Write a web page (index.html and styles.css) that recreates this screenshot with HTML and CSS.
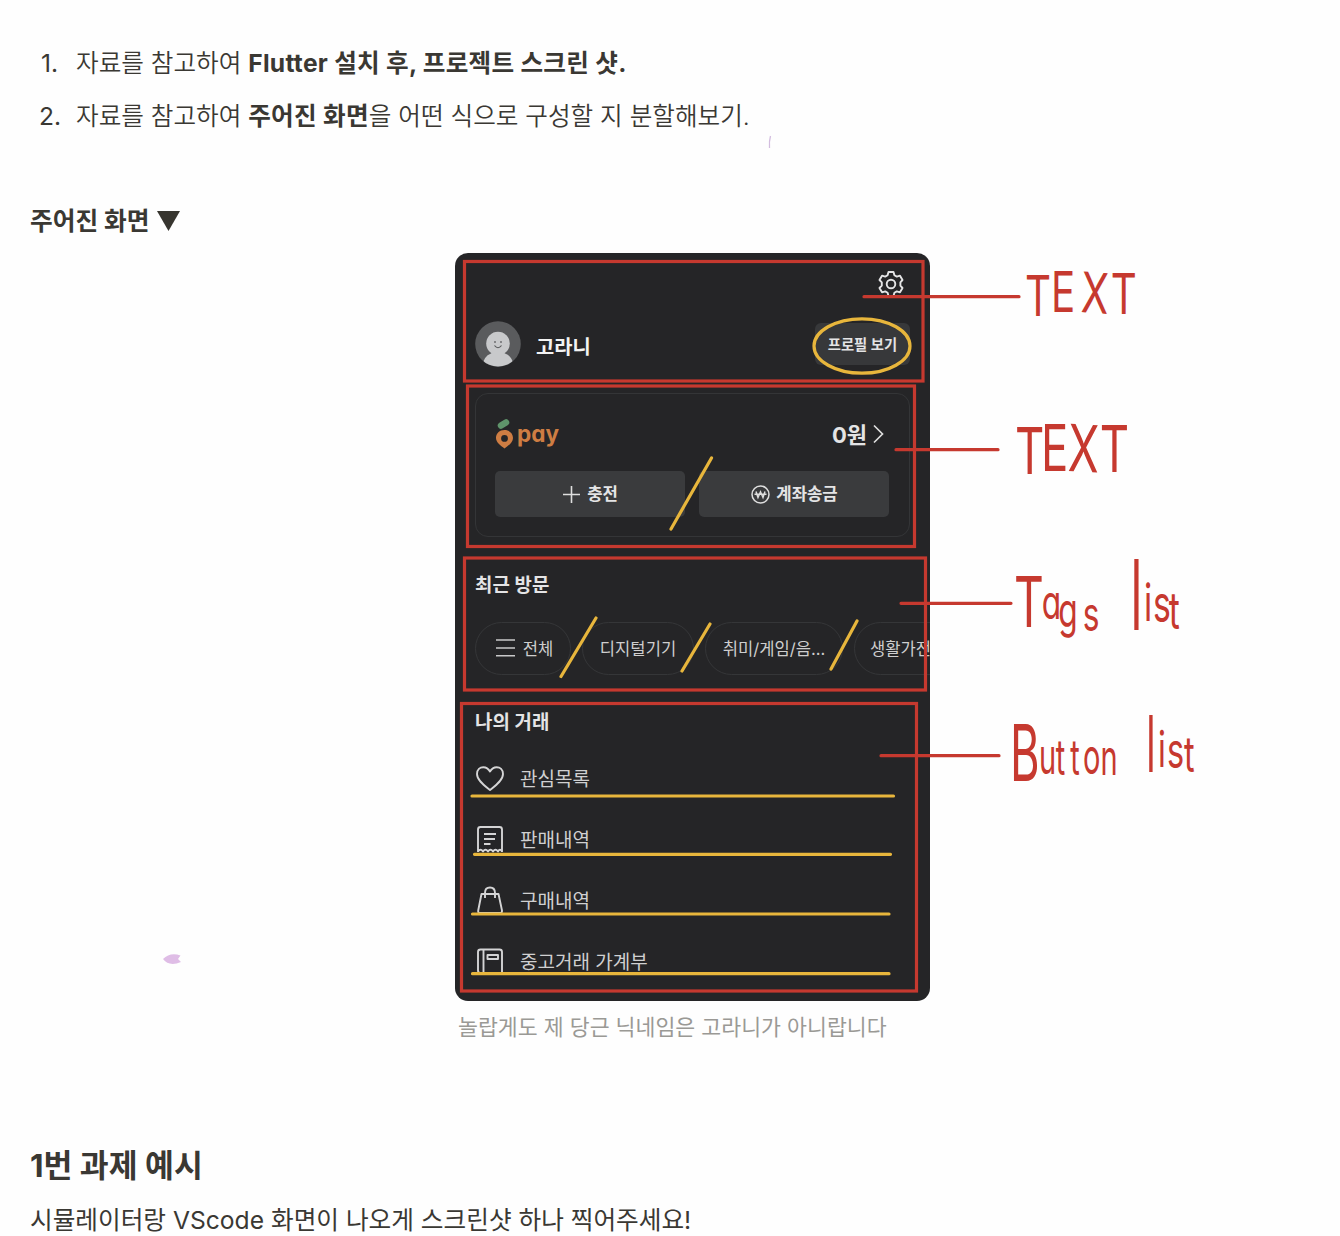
FILE: index.html
```html
<!DOCTYPE html>
<html lang="ko">
<head>
<meta charset="utf-8">
<title>과제 안내</title>
<link rel="stylesheet" href="styles.css">
</head>
<body>
<main class="page">
  <ol class="tasks">
    <li><span class="num first">1.</span><span>자료를 참고하여 <b>Flutter 설치 후, 프로젝트 스크린 샷.</b></span></li>
    <li><span class="num">2.</span><span>자료를 참고하여 <b>주어진 화면</b>을 어떤 식으로 구성할 지 분할해보기.</span></li>
  </ol>
  <h3 class="given"><span>주어진 화면</span><svg width="24" height="20" viewBox="0 0 24 20"><path d="M0 0H23L11.5 20Z" fill="#37352f"/></svg></h3>
  <figure class="figure">
    <section class="phone">
      <header class="top">
        <svg width="28" height="28" viewBox="0 0 28 28" fill="none" stroke="#e4e4e5" stroke-width="1.9" stroke-linejoin="round"><path d="M11.500 2h5l.9 3.200 2.400 1.400 3.200-.9 2.500 4.300-2.100 2.300v3.400l2.100 2.300-2.500 4.300-3.200-.9-2.400 1.400-.9 3.200h-5l-.9-3.200-2.400-1.400-3.200.9L2.500 18l2.300-2.300v-3.400L2.500 10 5 5.700l3.200.9 2.400-1.400Z"/><circle cx="14" cy="14" r="4.300"/></svg>
      </header>
      <div class="profile">
        <svg width="46" height="46" viewBox="0 0 46 46"><defs><clipPath id="face"><circle cx="23" cy="23" r="22.500"/></clipPath></defs><circle cx="23" cy="23" r="22.800" fill="#5a5b5d"/><g clip-path="url(#face)" fill="#c8c9cb"><circle cx="23" cy="22.500" r="11.800"/><path d="M7 46Q8.500 35 16 32.500Q18.500 31 18 29H28Q27.500 31 30 32.500Q37.500 35 39 46Z"/></g><path d="M20 20v2M26 20v2M19.500 24.500q3.500 4.500 7 0" fill="none" stroke="#57585a" stroke-width="1.200"/></svg>
        <strong class="name">고라니</strong>
        <span class="view">프로필 보기</span>
      </div>
      <div class="card">
        <div class="balance">
          <svg width="19" height="30" viewBox="0 0 19 30"><path d="M6 6.500L11 3.500" stroke="#5f946b" stroke-width="6.500" stroke-linecap="round"/><path fill-rule="evenodd" d="M9.500 11C14.500 11 18 14.500 18 19C18 23.500 13.500 26.500 9.500 29.500C5.500 26.500 1 23.500 1 19C1 14.500 4.500 11 9.500 11ZM9.500 16A3.400 3.400 0 1 0 9.500 22.800A3.400 3.400 0 1 0 9.500 16Z" fill="#ce7d43"/></svg>
          <span class="pay">pay</span>
          <span class="won">0원</span>
          <svg class="chev" width="12" height="20" viewBox="0 0 12 20" fill="none" stroke="#dedede" stroke-width="1.700"><path d="M1 1.500L9.500 10L1 18.500"/></svg>
        </div>
        <div class="actions">
          <span class="action"><svg width="17" height="17" viewBox="0 0 17 17" stroke="#dedede" stroke-width="1.600"><path d="M8.500 0V17M0 8.500H17"/></svg><b>충전</b></span>
          <span class="action send"><svg width="19" height="19" viewBox="0 0 19 19" fill="none" stroke="#dedede" stroke-width="1.500"><circle cx="9.500" cy="9.500" r="8.500"/><path d="M5 6.500L7 12.500L9.500 6.800L12 12.500L14 6.500M3.500 9.300H15.500" stroke-width="1.500"/></svg><b>계좌송금</b></span>
        </div>
      </div>
      <h4 class="heading recent">최근 방문</h4>
      <div class="chips">
        <span class="chip all"><svg width="19" height="18" viewBox="0 0 19 18" stroke="#c9c9ca" stroke-width="1.600"><path d="M0 1H19M0 9H19M0 16.800H19"/></svg>전체</span>
        <span class="chip digital">디지털기기</span>
        <span class="chip hobby">취미/게임/음...</span>
        <span class="chip home">생활가전</span>
      </div>
      <h4 class="heading trade">나의 거래</h4>
      <ul class="menu">
        <li><svg width="30" height="30" viewBox="0 0 30 30"><path d="M15 26C10 22 2 16.500 2 10C2 5.500 5 3.200 8.300 3.200C11.200 3.200 13.500 4.800 15 7.500C16.500 4.800 18.800 3.200 21.700 3.200C25 3.200 28 5.500 28 10C28 16.500 20 22 15 26Z"/></svg>관심목록</li>
        <li><svg width="30" height="30" viewBox="0 0 30 30"><path d="M3 27V4.500Q3 2 5.500 2H24.500Q27 2 27 4.500V27M9 9H21M9 14H20M9 19H15.500M3 26.500Q5.500 23 8 26.500Q10.500 23 13 26.500Q15.500 23 18 26.500Q20.500 23 23 26.500Q25 23 27 26.500"/></svg>판매내역</li>
        <li><svg width="30" height="30" viewBox="0 0 30 30"><path d="M6.500 8H23.500L27 24.500Q27.200 27 25 27H5Q2.800 27 3.200 24.500ZM10 12V7Q10 1.500 15 1.500T20 7V12"/></svg>구매내역</li>
        <li><svg width="30" height="30" viewBox="0 0 30 30"><path d="M5.500 2.500H24.500Q27 2.500 27 5V26H5.500Q3 26 3 23.500V5Q3 2.500 5.500 2.500ZM8.500 2.500V26M12.500 8H23V12H12.500Z"/></svg>중고거래 가계부</li>
      </ul>
    </section>
    <figcaption>놀랍게도 제 당근 닉네임은 고라니가 아니랍니다</figcaption>
  </figure>
  <h2 class="example">1번 과제 예시</h2>
  <p class="note">시뮬레이터랑 VScode 화면이 나오게 스크린샷 하나 찍어주세요!</p>

  <svg class="ink" width="1340" height="1236" viewBox="0 0 1340 1236">
    <g class="red">
      <rect x="464.500" y="261.500" width="458.500" height="119.500"/>
      <rect x="467.500" y="386" width="447" height="160.500"/>
      <rect x="464.500" y="558" width="461" height="132"/>
      <rect x="461.500" y="703.500" width="455" height="287.500"/>
      <path d="M864 296.700H1019M896 449.700H998M901 603.300H1011M881 755.700H999"/>
    </g>
    <g class="yellow">
      <ellipse cx="862" cy="346" rx="48" ry="27.200"/>
      <path d="M711.500 458L671 529M596 618L561 676.500M710 624L682 671M857 621L831 669M472 796H893.500M474.500 854.300H890.500M472.500 914H889M472.500 973.700H889"/>
    </g>
    <g class="hand">
      <text transform="translate(1025 316) scale(.72 1)" font-size="56" x="0 36 77 119" y="0 -4 -4 -2" rotate="0 0 3 0">TEXT</text>
      <text transform="translate(1015 474) scale(.7 1)" font-size="65" x="0 37 75 121" y="0 -3 -3 -2" rotate="0 0 2 0">TEXT</text>
      <text transform="translate(1014 627) scale(.66 1)" font-size="70">T<tspan font-size="48" x="42 67 104" y="-8 0 4">ags</tspan></text>
      <text transform="translate(1129 630) scale(.65 1)" font-size="98" class="thin">l<tspan font-size="52" x="23 37 61" y="-9 -8 -1">ist</tspan></text>
      <text transform="translate(1010 781) scale(.58 1)" font-size="78">B<tspan font-size="50" x="50 79 104 126 156" y="-7 -6 -6 -7 -6">utton</tspan></text>
      <text transform="translate(1145 772) scale(.65 1)" font-size="78" class="thin">l<tspan font-size="50" x="20 34 60" y="-5 -4 0">ist</tspan></text>
    </g>
    <path d="M770.500 136Q769 141 769.500 148" fill="none" stroke="#d3bddf" stroke-width="1.300"/>
    <path d="M163 959Q170 952 180.500 955.500L178 959L181 962Q169 967 163 959Z" fill="#dfbde6"/>
  </svg>
</main>
</body>
</html>
```
FILE: styles.css
```css
* { box-sizing: border-box; }
body { margin: 0; background: #fefefe; color: #3a3833; font-family: Inter, "Noto Sans CJK KR", sans-serif; }
svg { display: block; flex: none; }
h2, h3, h4, p, ol, ul, figure { margin: 0; padding: 0; list-style: none; white-space: nowrap; }
.page { position: relative; width: 1340px; height: 1236px; overflow: hidden; padding: 37px 30px 0; }
.tasks li { display: flex; height: 53px; line-height: 53px; font-size: 24.6px; font-weight: 350; }
.tasks b { font-weight: 700; letter-spacing: .27px; }
.num { width: 46px; padding-left: 9px; font-weight: 400; }
.num.first { padding-left: 11px; }
.given { display: flex; align-items: center; gap: 8px; height: 40px; margin-top: 58px; font-size: 24.7px; line-height: 40px; font-weight: 700; }
.figure { width: 475px; margin: 12px 0 0 425px; }
.phone { height: 748px; padding: 17px 20px 0; overflow: hidden; border-radius: 13px; background: #252527; color: #e4e4e5; }
.top { display: flex; justify-content: flex-end; height: 51px; padding-right: 5px; }
.profile { display: flex; align-items: center; height: 46px; }
.name { margin-left: 15px; padding-top: 2px; font-size: 19.8px; font-weight: 700; color: #f3f3f3; }
.view { width: 95px; height: 42px; margin-left: auto; border-radius: 6px; background: #37383a; font-size: 14.3px; font-weight: 600; line-height: 43px; text-align: center; }
.card { height: 144px; margin-top: 26px; padding: 24px 19px 0; border: 1px solid #343537; border-radius: 13px; }
.balance { display: flex; align-items: center; height: 31px; }
.pay { margin-left: 3px; color: #ce7d43; font-size: 22.6px; font-weight: 700; line-height: 30px; font-feature-settings: "cv11"; }
.won { margin-left: auto; padding-bottom: 2px; font-size: 22px; font-weight: 700; }
.chev { margin: 0 5px 0 6px; }
.actions { display: grid; grid-template-columns: 190px 190px; gap: 14px; margin-top: 22px; }
.action { display: flex; align-items: center; justify-content: center; gap: 7px; height: 46px; padding-left: 1px; border-radius: 5px; background: #3a3b3d; font-size: 16.7px; }
.action b { padding-bottom: 2px; }
.action.send { gap: 6px; }
.heading { font-size: 18.9px; font-weight: 600; line-height: 30px; }
.recent { margin-top: 34px; }
.chips { display: flex; gap: 11px; margin-top: 21px; }
.chip { display: flex; flex: none; align-items: center; justify-content: center; gap: 8px; height: 53px; padding-bottom: 2px; border: 1px solid #353638; border-radius: 27px; color: #cecece; font-size: 16.6px; }
.all { width: 96px; padding-left: 3px; }
.digital { width: 112px; }
.hobby { width: 138px; }
.home { width: 112px; justify-content: flex-start; padding-left: 15px; }
.trade { margin-top: 33px; }
.menu { margin-top: 10px; }
.menu li { display: flex; align-items: center; gap: 15px; height: 61px; padding-bottom: 2px; color: #d0d0d1; font-size: 19px; }
.menu svg { position: relative; top: 1px; fill: none; stroke: #d4d4d5; stroke-width: 1.9; stroke-linejoin: round; }
figcaption { padding-left: 3px; color: #9a9995; font-size: 21.65px; line-height: 52px; }
.example { margin-top: 87px; font-size: 31.4px; font-weight: 700; line-height: 52px; }
.note { margin-top: 8px; font-size: 24.65px; line-height: 40px; }
.ink { position: absolute; inset: 0; pointer-events: none; }
.red { fill: none; stroke: #c6392f; stroke-width: 3.2; stroke-linecap: round; }
.yellow { fill: none; stroke: #e8b63c; stroke-width: 3.2; stroke-linecap: round; }
.hand { fill: #c6392f; font-family: Inter, sans-serif; font-weight: 400; font-feature-settings: "cv11"; }
.hand tspan { font-weight: 400; }
.thin { font-weight: 300; }
```
